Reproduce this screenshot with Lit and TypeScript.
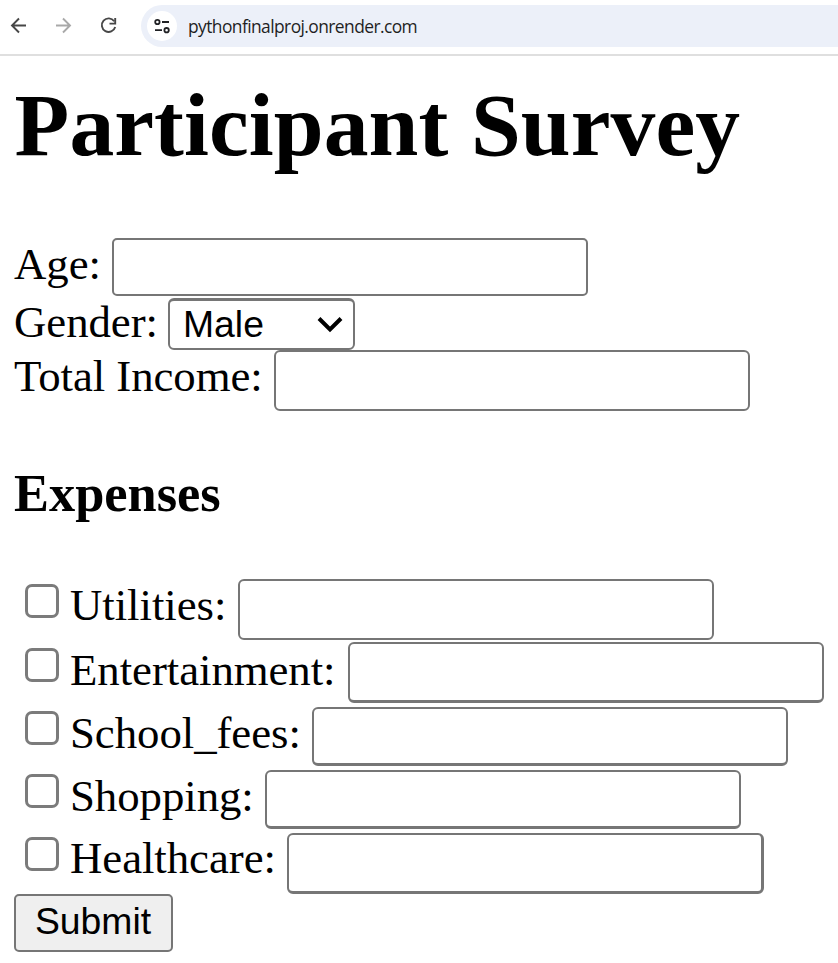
import { LitElement, html, css } from "lit";
import { customElement } from "lit/decorators.js";

const expenses = [
  { label: "Utilities:", row: "utilities" },
  { label: "Entertainment:", row: "entertainment" },
  { label: "School_fees:", row: "school" },
  { label: "Shopping:", row: "shopping" },
  { label: "Healthcare:", row: "healthcare" },
];

@customElement("browser-bar")
class BrowserBar extends LitElement {
  static styles = css`
    :host { display: flex; box-sizing: border-box; height: 56px; padding-top: 5px; border-bottom: 2px solid #dfdfdf; background: #fff; }
    .nav { display: flex; width: 141px; height: 42px; flex: none; }
    .nav svg { display: block; width: 141px; height: 42px; }
    .address { display: flex; align-items: center; flex: 1; height: 42px; box-sizing: border-box; padding-left: 6px; border-radius: 21px 0 0 21px; background: #ecf0f9; }
    .site { width: 30px; height: 30px; flex: none; border-radius: 50%; background: #fff; }
    .site svg { display: block; }
    .url { margin-left: 11px; font: 17.4px/24px "Open Sans", "Noto Sans", sans-serif; letter-spacing: -0.57px; color: #1f1f1f; white-space: nowrap; }
  `;
  render() {
    return html`
      <div class="nav">
        <svg viewBox="0 5 141 42" fill="none" stroke-width="1.9">
          <path d="M26 25.5H12.5M19 18.5l-7 7 7 7" stroke="#474747" />
          <path d="M56 25.5h13.5M63 18.5l7 7-7 7" stroke="#a9a9a9" />
          <path d="M114.2 21.2A6.8 6.8 0 1 0 115.2 27" stroke="#474747" />
          <path d="M115.2 18v5.6H109.5" stroke="#474747" stroke-width="1.9" />
        </svg>
      </div>
      <div class="address">
        <div class="site">
          <svg width="30" height="30" viewBox="0 0 30 30" fill="none" stroke="#202124" stroke-width="1.8">
            <circle cx="10.4" cy="11" r="2.2" />
            <path d="M15 11h7M8 19.2h7" />
            <circle cx="19.6" cy="19.2" r="2.2" />
          </svg>
        </div>
        <div class="url">pythonfinalproj.onrender.com</div>
      </div>`;
  }
}

@customElement("app-root")
class AppRoot extends LitElement {
  static styles = css`
    :host { display: block; height: 963px; overflow: hidden; background: #fff; color: #000; font-family: "Liberation Serif", "Times New Roman", serif; font-size: 44.8px; }
    .page { padding-left: 14px; }
    h1, h3 { margin: 0; font-weight: bold; white-space: nowrap; }
    h1 { padding-top: 19px; font-size: 89.6px; line-height: 100px; height: 163px; letter-spacing: 0.08px; text-indent: 0.6px; }
    h3 { padding-top: 53px; font-size: 52.4px; line-height: 58px; height: 115px; }
    .row { display: flex; align-items: flex-start; box-sizing: border-box; }
    .label { line-height: 50px; white-space: nowrap; margin-top: 1px; flex: none; letter-spacing: -0.05px; }
    input, select, button { appearance: none; box-sizing: border-box; margin: 0; outline: none; font: 37.33px "Liberation Sans", Arial, sans-serif; color: #000; }
    .field { width: 476px; flex: none; height: 61px; border: 2px solid #767676; border-radius: 6px; background: #fff; padding: 0; }
    .age { height: 60px; }
    .age .label { width: 98px; }
    .age .field { height: 58px; border-radius: 5px; }
    .gender { height: 52px; }
    .gender .label { width: 154px; margin-top: -1px; }
    .income .label { width: 260px; }
    .select { display: grid; width: 187px; height: 52px; }
    .select > * { grid-area: 1 / 1; }
    select { width: 187px; height: 52px; padding: 0 0 2px 13px; line-height: 44px; border: 2px solid #767676; border-top-width: 3px; border-radius: 6px; background: #fff; }
    .chevron { width: 28px; height: 18px; justify-self: end; align-self: center; margin-right: 11px; pointer-events: none; }
    .check { width: 34px; height: 34px; flex: none; margin: 5px 11px 0 11px; border: 3px solid #7b7b7b; border-radius: 7px; background: #fff; }
    .utilities { height: 63px; }
    .utilities .label { width: 168px; }
    .entertainment { height: 65px; }
    .entertainment .label { width: 278px; margin-top: 3px; }
    .entertainment .check { margin-top: 6px; }
    .entertainment .field { border-bottom-width: 3px; }
    .school { height: 63px; }
    .school .label { width: 242px; }
    .school .check, .shopping .check, .healthcare .check { margin-top: 4px; }
    .school .field, .shopping .field { height: 59px; border-bottom-width: 3px; }
    .shopping { height: 63px; }
    .shopping .label { width: 195px; }
    .healthcare { height: 61px; }
    .healthcare .label { width: 217px; margin-top: 0; }
    .healthcare .field { width: 477px; border-bottom-width: 3px; border-right-width: 3px; }
    button { display: block; width: 159px; height: 58px; padding: 0 1px 4px 0; line-height: 50px; border: 2px solid #767676; border-radius: 5px; background: #efefef; }
  `;
  render() {
    return html`
      <browser-bar></browser-bar>
      <form class="page" @submit=${(e: Event) => e.preventDefault()}>
        <h1>Participant Survey</h1>
        <div class="row age"><span class="label">Age:</span><input class="field" type="text" /></div>
        <div class="row gender">
          <span class="label">Gender:</span>
          <div class="select">
            <select><option>Male</option><option>Female</option></select>
            <svg class="chevron" viewBox="0 0 28 18" fill="none" stroke="#000" stroke-width="4">
              <path d="M3 3.5l11 11 11-11" />
            </svg>
          </div>
        </div>
        <div class="row income"><span class="label">Total Income:</span><input class="field" type="text" /></div>
        <h3>Expenses</h3>
        ${expenses.map(
          (e) => html`<div class="row ${e.row}">
            <input class="check" type="checkbox" /><span class="label">${e.label}</span><input class="field" type="text" />
          </div>`
        )}
        <button type="submit">Submit</button>
      </form>`;
  }
}
